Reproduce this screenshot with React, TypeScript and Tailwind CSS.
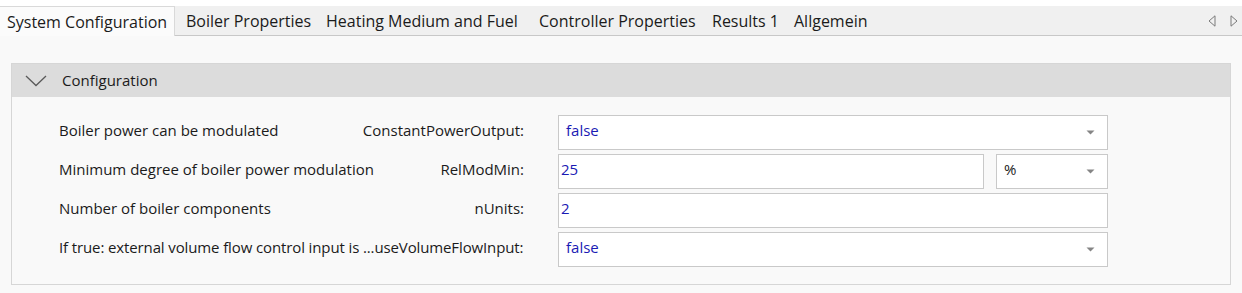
import React from 'react';

const tabs = [
  { label: 'System Configuration', w: 'w-[175px]', active: true },
  { label: 'Boiler Properties', w: 'w-[140px]' },
  { label: 'Heating Medium and Fuel', w: 'w-[213px]' },
  { label: 'Controller Properties', w: 'w-[173px]' },
  { label: 'Results 1', w: 'w-[82px]' },
  { label: 'Allgemein', w: 'w-[90px]' },
];

const Caret = () => (
  <svg width="9" height="5" viewBox="0 0 9 5" className="shrink-0">
    <path d="M0.5 0.5 L8.5 0.5 L4.5 4.5 Z" fill="#858585" />
  </svg>
);

const Select: React.FC<{ value: string; blue?: boolean; className?: string }> = ({ value, blue, className }) => (
  <div className={`h-[35px] bg-white border border-[#c9c9c9] flex items-center justify-between pl-[7px] pr-[12px] ${className ?? ''}`}>
    <span className={`pb-[5px] ${blue ? 'text-[#1a1ab4]' : 'text-[#1b1b1b]'}`}>{value}</span>
    <Caret />
  </div>
);

const Field: React.FC<{ value: string; className?: string }> = ({ value, className }) => (
  <div className={`h-[35px] bg-white border border-[#c9c9c9] flex items-center pl-[2px] ${className ?? ''}`}>
    <span className="pb-[5px] text-[#1a1ab4]">{value}</span>
  </div>
);

const rows: { left: string; right: string; tight?: boolean; control: React.ReactNode }[] = [
  { left: 'Boiler power can be modulated', right: 'ConstantPowerOutput:', control: <Select value="false" blue /> },
  {
    left: 'Minimum degree of boiler power modulation',
    right: 'RelModMin:',
    control: (
      <div className="flex gap-[12px]">
        <Field value="25" className="flex-1" />
        <Select value="%" className="w-[112px]" />
      </div>
    ),
  },
  { left: 'Number of boiler components', right: 'nUnits:', control: <Field value="2" /> },
  {
    left: 'If true: external volume flow control input is ...',
    right: 'useVolumeFlowInput:',
    tight: true,
    control: <Select value="false" blue />,
  },
];

export default function App() {
  return (
    <div className="w-[1242px] h-[293px] bg-[#f9f9f9] text-[#1b1b1b] text-[15px] overflow-hidden" style={{ fontFamily: '"Open Sans", "Noto Sans", sans-serif' }}>
      {/* tab strip */}
      <div className="h-[6px] bg-white" />
      <div className="h-[30px] bg-[#f0f0f0] border-b border-[#c8c8c8] flex items-stretch">
        {tabs.map((t) => (
          <div
            key={t.label}
            className={`${t.w} shrink-0 flex items-center text-[16px] whitespace-nowrap ${
              t.active ? 'pl-[7px] bg-[#fbfbfb] border-t border-r border-[#d9d9d9] -mb-px' : 'pl-[11px]'
            }`}
          >
            <span>{t.label}</span>
          </div>
        ))}
        <div className="flex-1" />
        <div className="flex items-center gap-[14px] pr-[4px]">
          <svg width="8" height="12" viewBox="0 0 8 12">
            <path d="M7 0.8 L1 6 L7 11.2 Z" fill="none" stroke="#7a7a7a" strokeWidth="1" />
          </svg>
          <svg width="8" height="12" viewBox="0 0 8 12">
            <path d="M1 0.8 L7 6 L1 11.2 Z" fill="none" stroke="#7a7a7a" strokeWidth="1" />
          </svg>
        </div>
      </div>

      {/* panel */}
      <div className="pt-[27px] pl-[11px] pr-[11px]">
        <div className="border border-[#d6d6d6] bg-[#f9f9f9]">
          <div className="h-[33px] bg-[#dcdcdc] flex items-center">
            <svg width="22" height="12" viewBox="0 0 22 12" className="ml-[13px] mr-[15px]">
              <path d="M1 1 L11 10.5 L21 1" fill="none" stroke="#5a5a5a" strokeWidth="1.3" />
            </svg>
            <span>Configuration</span>
          </div>
          <div className="pt-[18px] pb-[17px] pl-[47px] flex flex-col gap-[4px]">
            {rows.map((r) => (
              <div key={r.left} className="flex items-center">
                <div
                  className={`w-[465px] flex whitespace-nowrap pb-[4px] ${
                    r.tight ? 'justify-start tracking-[-0.12px]' : 'justify-between'
                  }`}
                >
                  <span>{r.left}</span>
                  <span>{r.right}</span>
                </div>
                <div className="ml-[34px] w-[550px]">{r.control}</div>
              </div>
            ))}
          </div>
        </div>
      </div>
    </div>
  );
}
